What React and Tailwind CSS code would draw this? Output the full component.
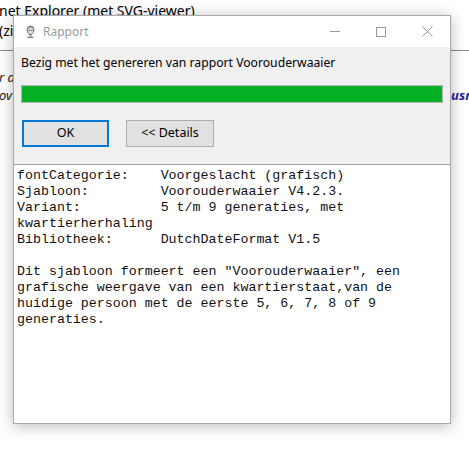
import React from 'react';

const details = [
  'fontCategorie:    Voorgeslacht (grafisch)',
  'Sjabloon:         Voorouderwaaier V4.2.3.',
  'Variant:          5 t/m 9 generaties, met',
  'kwartierherhaling',
  'Bibliotheek:      DutchDateFormat V1.5',
  '',
  'Dit sjabloon formeert een "Voorouderwaaier", een',
  'grafische weergave van een kwartierstaat,van de',
  'huidige persoon met de eerste 5, 6, 7, 8 of 9',
  'generaties.',
];

function PortraitIcon() {
  return (
    <svg width="11" height="13" viewBox="0 0 11 13">
      <ellipse cx="5.5" cy="5" rx="4" ry="4.6" fill="#8a8a8a" />
      <ellipse cx="5.5" cy="6" rx="2.6" ry="3.4" fill="#d8d8d8" />
      <rect x="3.6" y="5" width="1.2" height="0.9" fill="#444" />
      <rect x="6.2" y="5" width="1.2" height="0.9" fill="#444" />
      <path d="M3.5 8.3 Q5.5 10 7.5 8.3 L7 10 Q5.5 11 4 10 Z" fill="#6a6a6a" />
      <path d="M1.5 13 Q5.5 9.5 9.5 13 Z" fill="#7a7a7a" />
    </svg>
  );
}

function TitleButtons() {
  return (
    <div className="flex items-center h-full">
      <div className="w-[46px] h-full flex items-center justify-center">
        <div className="w-[10px] h-px bg-[#9a9a9a]" />
      </div>
      <div className="w-[46px] h-full flex items-center justify-center">
        <div className="w-[10px] h-[10px] border border-[#9a9a9a]" />
      </div>
      <div className="w-[46px] h-full flex items-center justify-center">
        <svg width="11" height="11" viewBox="0 0 11 11">
          <path d="M0.5 0.5 L10.5 10.5 M10.5 0.5 L0.5 10.5" stroke="#9a9a9a" strokeWidth="1" />
        </svg>
      </div>
    </div>
  );
}

export default function App() {
  return (
    <div className="relative w-[469px] h-[453px] bg-white overflow-hidden font-['Noto_Sans','Open_Sans',sans-serif]">
      {/* browser page behind the dialog */}
      <div className="text-[14px] leading-[19px] text-black pt-[1px]">
        <div className="-ml-[1px]">net Explorer (met SVG-viewer)</div>
        <div className="-ml-[1px] mt-[1px]">(zie</div>
      </div>
      <div className="mt-[10px] h-px bg-[#8c8c8c]" />
      <div className="mt-[17px] text-[13px] leading-[18px] italic text-[#222]">
        <div className="-ml-[1px]">r de</div>
        <div className="flex justify-between">
          <span className="-ml-[1px]">ov</span>
          <span className="font-bold text-[#1c1ca8] -mr-[4px]">usn</span>
        </div>
      </div>

      {/* dialog window */}
      <div className="absolute left-[13px] top-[15px] w-[438px] h-[409px] flex flex-col bg-[#f0f0f0] border border-[#a9a9a9] shadow-[0_2px_14px_rgba(0,0,0,0.28)]">
        <div className="h-[31px] bg-white flex items-center justify-between">
          <div className="flex items-center pl-[11px]">
            <PortraitIcon />
            <span className="ml-[7px] text-[12px] text-[#999999]">Rapport</span>
          </div>
          <TitleButtons />
        </div>

        <div className="px-[7px] pt-[8px]">
          <div className="text-[12.2px] leading-[16px] text-black">
            Bezig met het genereren van rapport Voorouderwaaier
          </div>
          <div className="mt-[14px] h-[18px] w-[422px] border border-[#b7b7b7] bg-[#06b025]" />
          <div className="mt-[17px] flex gap-[17px] pl-[1px]">
            <button className="w-[87px] h-[27px] bg-[#e1e1e1] border-2 border-[#0078d7] text-[12.5px] text-black">
              OK
            </button>
            <button className="w-[88px] h-[27px] bg-[#e1e1e1] border border-[#adadad] text-[12.5px] text-black">
              &lt;&lt; Details
            </button>
          </div>
        </div>

        <div className="mt-[17px] flex-1 bg-white border-t border-[#a0a0a0] pl-[3px] pt-[3px]">
          <pre className="font-['Liberation_Mono','Courier_New',monospace] text-[13.3px] leading-[16px] text-[#111] whitespace-pre">
            {details.join('\n')}
          </pre>
        </div>
      </div>
    </div>
  );
}
